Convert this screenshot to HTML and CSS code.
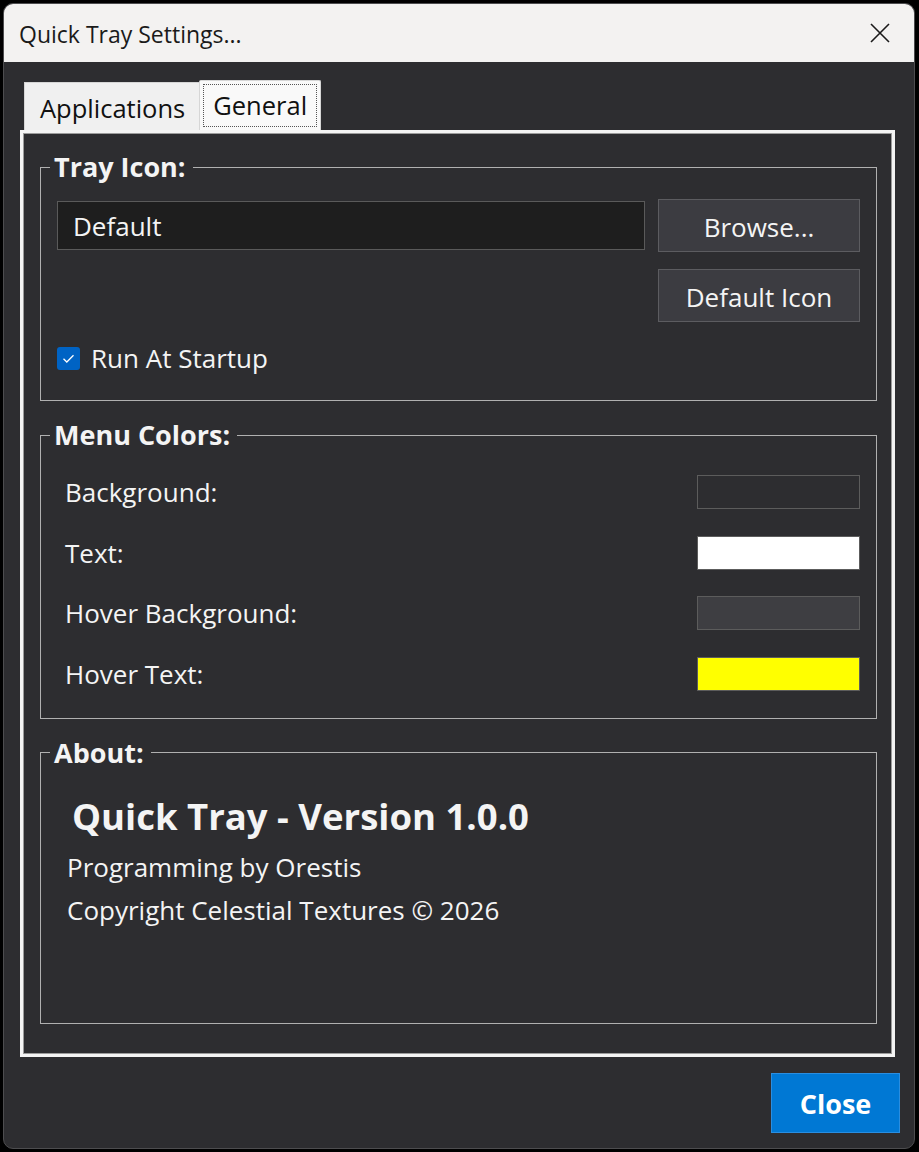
FILE: index.html
```html
<!DOCTYPE html>
<html lang="en">
<head>
    <meta charset="UTF-8">
    <title>Quick Tray Settings...</title>
    <link rel="stylesheet" href="styles.css">
</head>
<body>
    <div class="window">
        <div class="titlebar">
            <span class="title">Quick Tray Settings...</span>
            <svg class="close-x" width="20" height="20" viewBox="0 0 20 20">
                <path d="M1 1 L19 19 M19 1 L1 19" stroke="#1a1a1a" stroke-width="1.6" fill="none"/>
            </svg>
        </div>
        <div class="client">
            <ul class="tabs">
                <li class="tab">Applications</li>
                <li class="tab active"><span class="focus">General</span></li>
            </ul>
            <div class="panel">
                <fieldset class="group">
                    <legend>Tray Icon:</legend>
                    <div class="group-body tray">
                        <div class="icon-grid">
                            <div class="textbox">Default</div>
                            <button class="btn">Browse...</button>
                            <button class="btn btn-second">Default Icon</button>
                        </div>
                        <label class="check">
                            <span class="box">
                                <svg width="23" height="23" viewBox="0 0 23 23">
                                    <path d="M6.5 11.8 L9.8 15 L16.5 8.3" stroke="#fff" stroke-width="1.3" fill="none"/>
                                </svg>
                            </span>
                            Run At Startup
                        </label>
                    </div>
                </fieldset>

                <fieldset class="group">
                    <legend>Menu Colors:</legend>
                    <div class="group-body colors">
                        <div class="color-row">
                            <span>Background:</span>
                            <span class="swatch sw-bg"></span>
                        </div>
                        <div class="color-row">
                            <span>Text:</span>
                            <span class="swatch sw-text"></span>
                        </div>
                        <div class="color-row">
                            <span>Hover Background:</span>
                            <span class="swatch sw-hover"></span>
                        </div>
                        <div class="color-row">
                            <span>Hover Text:</span>
                            <span class="swatch sw-hover-text"></span>
                        </div>
                    </div>
                </fieldset>

                <fieldset class="group about">
                    <legend>About:</legend>
                    <div class="group-body about-body">
                        <h2>Quick Tray - Version 1.0.0</h2>
                        <p>Programming by Orestis</p>
                        <p>Copyright Celestial Textures &copy; 2026</p>
                    </div>
                </fieldset>
            </div>
            <div class="footer">
                <button class="btn-close">Close</button>
            </div>
        </div>
    </div>
</body>
</html>
```

FILE: styles.css
```css
body {
    margin: 0;
    background: #000;
    font-family: "Open Sans", "Noto Sans", sans-serif;
}
.window {
    margin: 3px;
    width: 910px;
    height: 1144px;
    border: 1px solid #4d4d4f;
    border-radius: 10px;
    overflow: hidden;
    background: #2d2d30;
    color: #f4f4f4;
}
.titlebar {
    height: 58px;
    background: #f3f2f1;
    display: flex;
    align-items: center;
    justify-content: space-between;
    padding: 0 24px 0 15px;
}
.title {
    color: #1a1a1a;
    font-size: 23px;
    margin-top: 2px;
}
.client {
    padding: 18px 0 0 16px;
}
.tabs {
    list-style: none;
    margin: 0 0 0 4px;
    padding: 0;
    display: flex;
    align-items: flex-end;
    height: 50px;
}
.tab {
    color: #111;
    background: #f0f0f0;
    border: 1px solid #d6d6d6;
    border-bottom: none;
    font-size: 25.5px;
    height: 48px;
    line-height: 50px;
    padding: 0 15px;
    box-sizing: border-box;
}
.tab.active {
    background: #f9f9f9;
    height: 50px;
    margin-left: -2px;
    padding: 3px;
    border-radius: 2px 2px 0 0;
}
.focus {
    display: block;
    border: 1px dotted #555;
    height: 43px;
    line-height: 40px;
    padding: 0 9px;
    box-sizing: border-box;
}
.panel {
    width: 875px;
    height: 927px;
    box-sizing: border-box;
    border: 3px solid #f4f4f4;
    box-shadow: inset 0 0 0 1px #9c9c9c;
    padding: 20px 15px 0 17px;
}
.group {
    margin: 0 0 20px 0;
    padding: 0;
    border: 1px solid #b0b0b0;
    min-width: 0;
}
.group legend {
    font-weight: bold;
    font-size: 27px;
    line-height: 28px;
    padding: 0 7px 0 4px;
    margin-left: 9px;
}
.tray {
    padding: 18px 16px 0 16px;
}
.icon-grid {
    display: grid;
    grid-template-columns: 1fr 202px;
    column-gap: 13px;
    row-gap: 17px;
    align-items: center;
}
.textbox {
    height: 49px;
    box-sizing: border-box;
    background: #1e1e1e;
    border: 1px solid #5a5a5a;
    font-size: 26px;
    line-height: 49px;
    padding-left: 15px;
}
.btn {
    height: 53px;
    background: #3c3c41;
    border: 1px solid #5c5c60;
    color: #f4f4f4;
    font-family: inherit;
    font-size: 26px;
    padding: 2px 0 0 0;
}
.btn-second {
    grid-column: 2;
}
.check {
    display: flex;
    align-items: center;
    gap: 11px;
    font-size: 26px;
    margin: 23px 0 0 0;
    height: 26px;
    padding-bottom: 29px;
}
.box {
    width: 23px;
    height: 23px;
    border-radius: 3px;
    background: #0063c4;
    display: block;
}
.box svg {
    display: block;
}
.colors {
    padding: 26px 16px 27px 24px;
}
.color-row {
    display: flex;
    justify-content: space-between;
    align-items: center;
    height: 34px;
    font-size: 26px;
    margin-bottom: 26.5px;
}
.color-row:last-child {
    margin-bottom: 0;
}
.swatch {
    width: 163px;
    height: 34px;
    box-sizing: border-box;
    border: 1px solid #5c5c5c;
}
.sw-bg {
    background: #2d2d30;
}
.sw-text {
    background: #fff;
}
.sw-hover {
    background: #3e3e42;
}
.sw-hover-text {
    background: #ffff00;
}
.about {
    height: 285px;
    box-sizing: border-box;
}
.about-body {
    padding: 26px 16px 0 26px;
}
.about h2 {
    margin: 0 0 7px 5px;
    font-size: 36.5px;
    line-height: 46px;
}
.about p {
    margin: 0;
    font-size: 26px;
    line-height: 43px;
}
.footer {
    display: flex;
    justify-content: flex-end;
    padding: 16px 14px 0 0;
}
.btn-close {
    width: 129px;
    height: 60px;
    background: #0078d4;
    border: 1px solid #2a8ee0;
    color: #fff;
    font-family: inherit;
    font-weight: bold;
    font-size: 27px;
}
```
